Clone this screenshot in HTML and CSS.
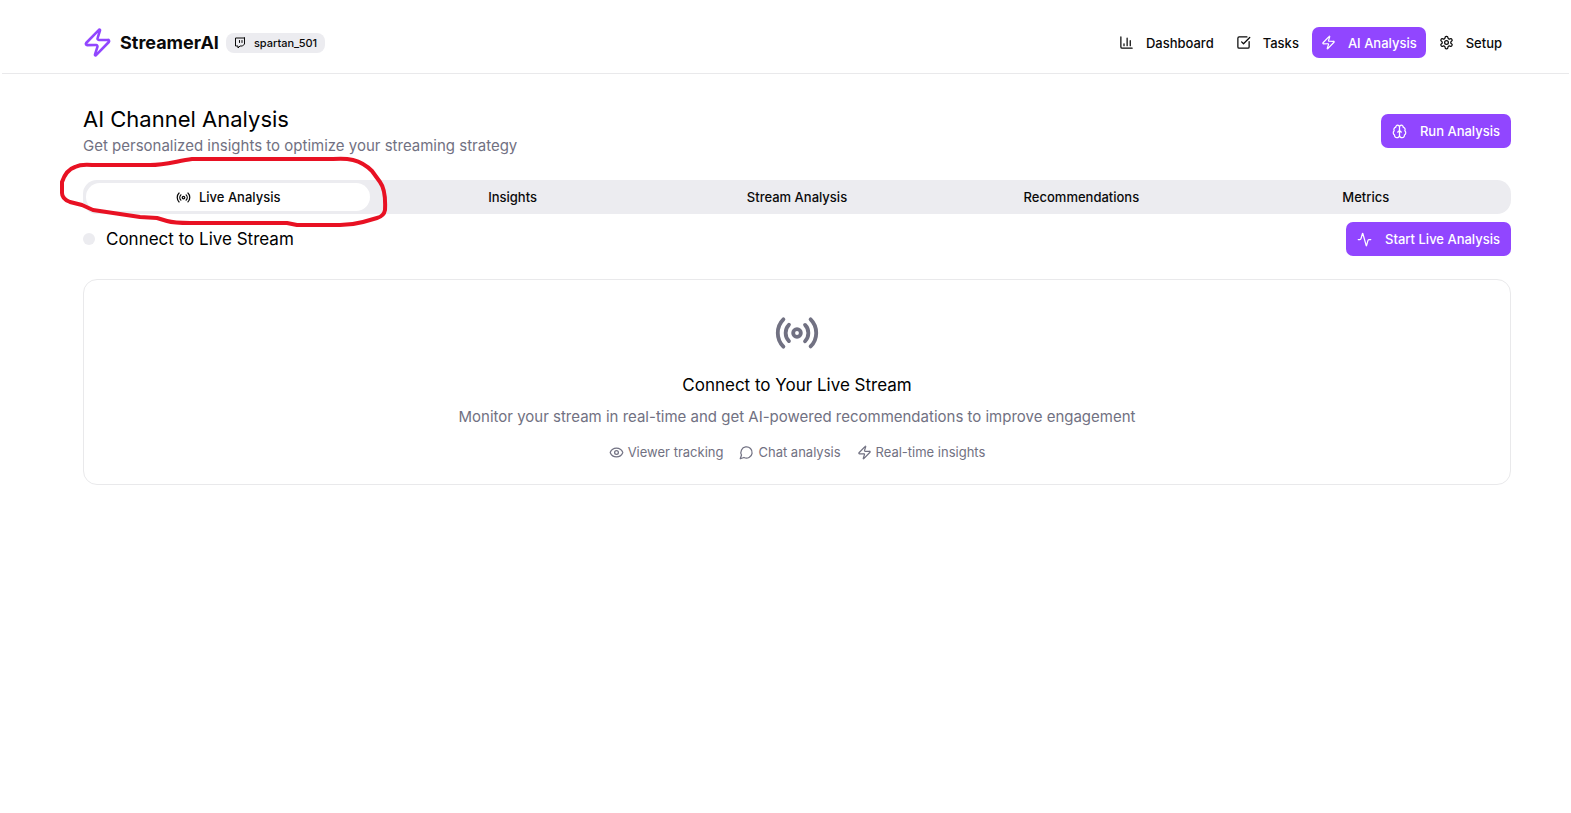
FILE: index.html
```html
<!DOCTYPE html>
<html lang="en">
<head>
    <meta charset="UTF-8">
    <meta name="viewport" content="width=device-width, initial-scale=1.0">
    <title>StreamerAI - AI Channel Analysis</title>
    <link rel="stylesheet" href="styles.css">
</head>
<body>
    <!-- Shared icons -->
    <svg class="sprite" aria-hidden="true">
        <symbol id="zap" viewBox="0 0 24 24">
            <path d="M4 14a1 1 0 0 1-.78-1.63l9.9-10.2a.5.5 0 0 1 .86.46l-1.92 6.02A1 1 0 0 0 13 10h7a1 1 0 0 1 .78 1.63l-9.9 10.2a.5.5 0 0 1-.86-.46l1.92-6.02A1 1 0 0 0 11 14z"/>
        </symbol>
        <symbol id="radio" viewBox="0 0 24 24">
            <path d="M4.9 19.1C1 15.2 1 8.8 4.9 4.9M7.8 16.2c-2.3-2.3-2.3-6.1 0-8.5M16.2 7.8c2.3 2.3 2.3 6.1 0 8.5M19.1 4.9C23 8.8 23 15.1 19.1 19"/>
            <circle cx="12" cy="12" r="2"/>
        </symbol>
    </svg>

    <header class="header">
        <div class="brand">
            <svg class="logo"><use href="#zap"/></svg>
            <span class="brand-name">StreamerAI</span>
            <span class="badge">
                <svg class="icon-xs" viewBox="0 0 24 24"><path d="M21 2H3v16h5v4l4-4h5l4-4V2zM11 11V7M16 11V7"/></svg>
                spartan_501
            </span>
        </div>
        <nav class="nav">
            <a class="nav-link" href="#dashboard">
                <svg class="icon" viewBox="0 0 24 24"><path d="M3 3v16a2 2 0 0 0 2 2h16M18 17V9M13 17V5M8 17v-3"/></svg>
                Dashboard
            </a>
            <a class="nav-link" href="#tasks">
                <svg class="icon" viewBox="0 0 24 24"><path d="M21 10.5V19a2 2 0 0 1-2 2H5a2 2 0 0 1-2-2V5a2 2 0 0 1 2-2h12.5M9 11l3 3L22 4"/></svg>
                Tasks
            </a>
            <a class="nav-link active" href="#analysis">
                <svg class="icon"><use href="#zap"/></svg>
                AI Analysis
            </a>
            <a class="nav-link" href="#setup">
                <svg class="icon" viewBox="0 0 24 24"><path d="M12.22 2h-.44a2 2 0 0 0-2 2v.18a2 2 0 0 1-1 1.73l-.43.25a2 2 0 0 1-2 0l-.15-.08a2 2 0 0 0-2.73.73l-.22.38a2 2 0 0 0 .73 2.73l.15.1a2 2 0 0 1 1 1.72v.51a2 2 0 0 1-1 1.74l-.15.09a2 2 0 0 0-.73 2.73l.22.38a2 2 0 0 0 2.73.73l.15-.08a2 2 0 0 1 2 0l.43.25a2 2 0 0 1 1 1.73V20a2 2 0 0 0 2 2h.44a2 2 0 0 0 2-2v-.18a2 2 0 0 1 1-1.73l.43-.25a2 2 0 0 1 2 0l.15.08a2 2 0 0 0 2.73-.73l.22-.39a2 2 0 0 0-.73-2.73l-.15-.08a2 2 0 0 1-1-1.74v-.5a2 2 0 0 1 1-1.74l.15-.09a2 2 0 0 0 .73-2.73l-.22-.38a2 2 0 0 0-2.73-.73l-.15.08a2 2 0 0 1-2 0l-.43-.25a2 2 0 0 1-1-1.73V4a2 2 0 0 0-2-2z"/><circle cx="12" cy="12" r="3"/></svg>
                Setup
            </a>
        </nav>
    </header>

    <main class="main">
        <div class="row page-head">
            <div>
                <h1>AI Channel Analysis</h1>
                <p class="muted">Get personalized insights to optimize your streaming strategy</p>
            </div>
            <button class="btn" type="button">
                <svg class="icon" viewBox="0 0 24 24"><path d="M12 5a3 3 0 1 0-5.997.125 4 4 0 0 0-2.526 5.77 4 4 0 0 0 .556 6.588A4 4 0 1 0 12 18ZM12 5a3 3 0 1 1 5.997.125 4 4 0 0 1 2.526 5.77 4 4 0 0 1-.556 6.588A4 4 0 1 1 12 18ZM15 13a4.5 4.5 0 0 1-3-4 4.5 4.5 0 0 1-3 4"/></svg>
                Run Analysis
            </button>
        </div>

        <div class="tabs-wrap">
            <div class="tabs" role="tablist">
                <button class="tab selected" type="button" role="tab" aria-selected="true">
                    <svg class="icon"><use href="#radio"/></svg>
                    Live Analysis
                </button>
                <button class="tab" type="button" role="tab">Insights</button>
                <button class="tab" type="button" role="tab">Stream Analysis</button>
                <button class="tab" type="button" role="tab">Recommendations</button>
                <button class="tab" type="button" role="tab">Metrics</button>
            </div>
            <!-- Hand-drawn marker around the first tab -->
            <svg class="marker" viewBox="58 154 332 76" aria-hidden="true">
                <path d="M92 165H150C165 165 177 161 192 159H333Q345 158 353 160C361 162 367 166 372 171L380 182Q386 190 385 210Q384 216 377 218L363 222Q352 225 340 225H297L287 223H190Q174 223 167 221L157 218L140 217L93 210L82 205L70 202Q62 199 62 193V182Q66 170 75 167Q81 164 92 165"/>
            </svg>
        </div>

        <div class="row live-head">
            <h2 class="live-title"><span class="dot"></span>Connect to Live Stream</h2>
            <button class="btn" type="button">
                <svg class="icon" viewBox="0 0 24 24"><path d="M22 12h-2.48a2 2 0 0 0-1.93 1.46l-2.35 8.36a.25.25 0 0 1-.48 0L9.24 2.18a.25.25 0 0 0-.48 0l-2.35 8.36A2 2 0 0 1 4.49 12H2"/></svg>
                Start Live Analysis
            </button>
        </div>

        <section class="card">
            <svg class="card-icon"><use href="#radio"/></svg>
            <h3>Connect to Your Live Stream</h3>
            <p class="muted">Monitor your stream in real-time and get AI-powered recommendations to improve engagement</p>
            <ul class="features">
                <li>
                    <svg class="icon" viewBox="0 0 24 24"><path d="M2.06 12.35a1 1 0 0 1 0-.7 10.75 10.75 0 0 1 19.88 0 1 1 0 0 1 0 .7 10.75 10.75 0 0 1-19.88 0"/><circle cx="12" cy="12" r="3"/></svg>
                    Viewer tracking
                </li>
                <li>
                    <svg class="icon" viewBox="0 0 24 24"><path d="M7.9 20A9 9 0 1 0 4 16.1L2 22Z"/></svg>
                    Chat analysis
                </li>
                <li>
                    <svg class="icon"><use href="#zap"/></svg>
                    Real-time insights
                </li>
            </ul>
        </section>
    </main>
</body>
</html>
```
FILE: styles.css
```css
* {
    box-sizing: border-box;
}

body {
    margin: 0;
    background-color: #fff;
    color: #0a0a0a;
    font-family: 'Inter', sans-serif;
    font-size: 15px;
}

h1, h2, h3, p, ul {
    margin: 0;
    padding: 0;
    font-weight: 400;
}

h1, h2, h3 {
    color: #000;
}

svg {
    flex: none;
    fill: none;
    stroke: currentColor;
    stroke-width: 2;
    stroke-linecap: round;
    stroke-linejoin: round;
}

.sprite {
    display: none;
}

.icon {
    width: 15px;
    height: 15px;
}

.icon-xs {
    width: 12px;
    height: 12px;
}

/* Header */
.header {
    display: flex;
    align-items: center;
    justify-content: space-between;
    height: 74px;
    margin: 0 2px;
    padding: 12px 58px 0 80px;
    border-bottom: 1px solid #e9e9eb;
}

.brand {
    display: flex;
    align-items: center;
    gap: 7px;
}

.logo {
    width: 31px;
    height: 31px;
    color: #9146ff;
}

.brand-name {
    font-size: 18px;
    font-weight: 700;
}

.badge {
    display: flex;
    align-items: center;
    gap: 8px;
    height: 20px;
    padding: 0 8px;
    border-radius: 8px;
    background-color: #ececf0;
    font-size: 11px;
    font-weight: 500;
}

.nav {
    display: flex;
    gap: 4px;
}

.nav-link {
    display: flex;
    align-items: center;
    gap: 12px;
    height: 31px;
    padding: 0 9px;
    border-radius: 7px;
    color: inherit;
    font-size: 13px;
    font-weight: 500;
    text-decoration: none;
}

.nav-link.active {
    background-color: #9146ff;
    color: #fff;
}

/* Page */
.main {
    padding: 32px 60px 0 83px;
}

.row {
    display: flex;
    align-items: center;
    justify-content: space-between;
}

.page-head {
    height: 50px;
    margin-bottom: 24px;
}

h1 {
    font-size: 22px;
    line-height: 30px;
}

.muted {
    color: #717182;
    font-weight: 400;
    line-height: 24px;
}

.btn {
    display: flex;
    align-items: center;
    gap: 13px;
    height: 34px;
    padding: 0 11px;
    border: none;
    border-radius: 7px;
    background-color: #9146ff;
    color: #fff;
    font-family: inherit;
    font-size: 13px;
    font-weight: 500;
    cursor: pointer;
}

/* Tabs */
.tabs-wrap {
    position: relative;
}

.tabs {
    display: grid;
    grid-template-columns: repeat(5, 1fr);
    height: 34px;
    padding: 3px;
    border-radius: 14px;
    background-color: #ececf0;
}

.tab {
    display: flex;
    align-items: center;
    justify-content: center;
    gap: 8px;
    border: none;
    border-radius: 14px;
    background: none;
    color: inherit;
    font-family: inherit;
    font-size: 13px;
    font-weight: 500;
    cursor: pointer;
}

.tab.selected {
    background-color: #fff;
}

.marker {
    position: absolute;
    top: -26px;
    left: -25px;
    width: 332px;
    height: 76px;
    color: #e81123;
    stroke-width: 4;
    pointer-events: none;
}

/* Live panel */
.live-head {
    margin: 8px 0 23px;
}

.live-title {
    display: flex;
    align-items: center;
    gap: 11px;
    font-size: 17px;
}

.dot {
    width: 12px;
    height: 12px;
    border-radius: 50%;
    background-color: #ececf0;
}

.card {
    display: flex;
    flex-direction: column;
    align-items: center;
    padding: 30px 24px 20px;
    border: 1px solid #e9e9eb;
    border-radius: 14px;
}

.card-icon {
    width: 46px;
    height: 46px;
    margin-bottom: 16px;
    color: #717182;
}

h3 {
    margin-bottom: 7px;
    font-size: 17px;
    line-height: 26px;
}

.features {
    display: flex;
    gap: 16px;
    margin-top: 11px;
    color: #717182;
    font-size: 13px;
    line-height: 24px;
    list-style: none;
}

.features li {
    display: flex;
    align-items: center;
    gap: 4px;
    font-weight: 400;
}
```
